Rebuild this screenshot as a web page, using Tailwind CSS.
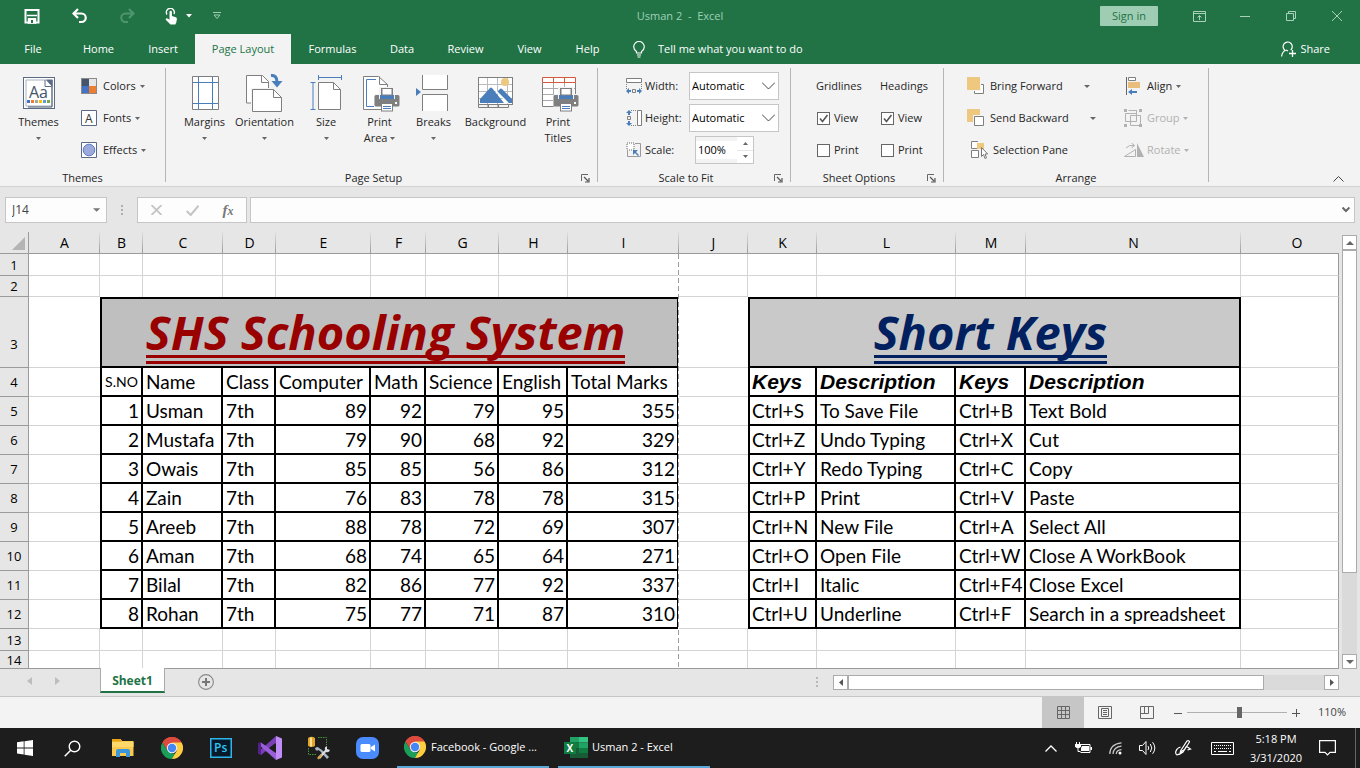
<!DOCTYPE html>
<html lang="en">
<head>
<meta charset="utf-8">
<title>Usman 2 - Excel</title>
<script src="https://cdn.jsdelivr.net/npm/@tailwindcss/browser@4"></script>
</head>
<body class="flex h-screen flex-col overflow-hidden bg-[#e6e6e6] font-['Open_Sans','Noto_Sans',sans-serif] text-[12px] text-[#262626]">

<svg class="hidden" aria-hidden="true">
  <symbol id="printer" viewBox="0 0 26 25">
    <rect x="5" y="0" width="16" height="9" fill="#f3f3f3"/>
    <rect x="0" y="7" width="26" height="13" rx="2" fill="#f3f3f3"/>
    <rect x="7.500" y="1.500" width="11" height="8" fill="#fff" stroke="#7f7f7f"/>
    <path d="M2 8h22a1.500 1.500 0 0 1 1.500 1.500V18a1.500 1.500 0 0 1-1.500 1.500H2A1.500 1.500 0 0 1 .5 18V9.500A1.500 1.500 0 0 1 2 8z" fill="#7f7f7f"/>
    <path d="M5 8h16v4H5z" fill="#f3f3f3"/><path d="M6 8h14v4H6z" fill="#4a7ebb"/>
    <path d="M8 8V1.500h10V8z" fill="#fff" stroke="#7f7f7f"/>
    <rect x="21" y="15" width="2" height="2" fill="#fff"/>
    <rect x="7.500" y="16.500" width="11" height="7.500" fill="#fff" stroke="#7f7f7f"/>
    <path d="M9 19.500h8M9 21.500h8" stroke="#4a7ebb"/>
  </symbol>
  <symbol id="chrome" viewBox="0 0 22 22">
    <path d="M11 11 1.470 5.500A11 11 0 0 1 20.530 5.500z" fill="#db4a3c"/>
    <path d="M11 0a11 11 0 0 1 9.530 5.500H11L6.240 13.750 1.470 5.500A11 11 0 0 1 11 0z" fill="#dd4b3e"/>
    <path d="M1.470 5.500 6.240 13.750 11 16.500h4.760L11 22A11 11 0 0 1 1.470 5.500z" fill="#1a9f5b"/>
    <path d="M20.530 5.500A11 11 0 0 1 11 22l4.760-8.250L11 5.500z" fill="#ffcd40"/>
    <circle cx="11" cy="11" r="5.200" fill="#f4f4f4"/>
    <circle cx="11" cy="11" r="4.200" fill="#4587f3"/>
  </symbol>
  <symbol id="launcher" viewBox="0 0 9 9">
    <path d="M.5 7V.5H7" fill="none" stroke="#666"/><path d="M3 3l4 4M8 4v4H4" fill="none" stroke="#555" stroke-width="1.200"/>
  </symbol>
</svg>

<!-- Title bar -->
<header class="shrink-0 bg-[#217346] text-white">
  <div class="grid h-8 grid-cols-[1fr_auto_1fr] items-center">
    <div class="flex items-center pl-6">
      <button aria-label="Save" class="w-12"><svg width="16" height="16" viewBox="0 0 16 16"><path d="M1.500 2h13v12.500h-13z" fill="none" stroke="#fff" stroke-width="2"/><path d="M3 7.500h10M4.500 15V11h7v4z" stroke="#fff" stroke-width="1.500" fill="none"/><path d="M4 10h8v5H4z" fill="#fff"/><path d="M7 12h2v3H7z" fill="#217346"/></svg></button>
      <button aria-label="Undo" class="w-[47px]"><svg width="16" height="16" viewBox="0 0 16 16"><path d="M6 1 1.500 5.500 6 10M2 5.500h7.500a4.200 4.200 0 0 1 0 8.500H7" fill="none" stroke="#fff" stroke-width="2.200"/></svg></button>
      <button aria-label="Redo" class="w-[46px]" disabled><svg width="16" height="16" viewBox="0 0 16 16"><path d="M10 1l4.500 4.500L10 10M14 5.500H6.500a4.200 4.200 0 0 0 0 8.500H9" fill="none" stroke="#4f9670" stroke-width="2"/></svg></button>
      <button aria-label="Touch/Mouse Mode" class="flex w-12 items-center"><svg width="13" height="17" viewBox="0 0 13 17"><path d="M2 6.500A4 4 0 1 1 9 6" fill="none" stroke="#fff" stroke-width="1.400"/><path d="M4.500 4a1.200 1.200 0 0 1 2.400 0v4l4 1.200q1.200.5 1 1.800l-.6 3.500-1 2H5.500L1 12q-.8-1 .2-1.600 1-.4 1.800.4l1.500 1z" fill="#fff"/></svg><svg class="ml-2" width="6" height="4" viewBox="0 0 6 4"><path d="M0 0h6L3 3.500z" fill="#fff"/></svg></button>
      <button aria-label="Customize Quick Access Toolbar"><svg width="8" height="8" viewBox="0 0 8 8"><path d="M0 .5h8M1 3l3 3.500L7 3z" stroke="#9fcdb3" fill="none"/></svg></button>
    </div>
    <h1 class="whitespace-pre text-[11px] text-[#9fd0b5]">Usman 2  -  Excel</h1>
    <div class="flex items-center justify-end">
      <button class="mr-[18px] h-5 w-[58px] rounded-[1px] bg-[#9fcdb3] text-[11px] leading-5 text-[#217346]">Sign in</button>
      <button aria-label="Ribbon Display Options" class="flex w-[46px] justify-center"><svg width="13" height="11" viewBox="0 0 13 11"><path d="M.5.5h12v10H.5zM.5 2.500h12M6.500 9V4.500M4.500 6.500l2-2 2 2" fill="none" stroke="#a8d3ba"/></svg></button>
      <button aria-label="Minimize" class="flex w-[46px] justify-center"><svg width="10" height="10" viewBox="0 0 10 10"><path d="M0 5.500h10" stroke="#a8d3ba"/></svg></button>
      <button aria-label="Restore" class="flex w-[46px] justify-center"><svg width="10" height="10" viewBox="0 0 10 10"><path d="M.5 2.500h7v7h-7zM2.500 2.500v-2h7v7h-2" fill="none" stroke="#a8d3ba"/></svg></button>
      <button aria-label="Close" class="flex w-[46px] justify-center"><svg width="10" height="10" viewBox="0 0 10 10"><path d="M0 0l10 10M10 0 0 10" stroke="#a8d3ba"/></svg></button>
    </div>
  </div>
  <nav class="flex h-8 items-end text-[11px]">
    <button class="h-[30px] w-[66px]">File</button>
    <button class="h-[30px] w-[65px]">Home</button>
    <button class="h-[30px] w-16">Insert</button>
    <button class="h-[30px] w-24 bg-[#f3f3f3] text-[#217346]">Page Layout</button>
    <button class="h-[30px] w-[83px]">Formulas</button>
    <button class="h-[30px] w-14">Data</button>
    <button class="h-[30px] w-[71px]">Review</button>
    <button class="h-[30px] w-[57px]">View</button>
    <button class="h-[30px] w-[59px]">Help</button>
    <button class="flex h-[30px] items-center pl-4 font-medium"><svg class="mr-[13px]" width="12" height="17" viewBox="0 0 12 17"><path d="M3.500 12V10.500Q.7 8.500.7 5.800a5.300 5.300 0 0 1 10.600 0q0 2.700-2.800 4.700V12zM4 14h4M4.500 16h3" fill="none" stroke="#fff" stroke-width="1.200"/></svg>Tell me what you want to do</button>
    <button class="ml-auto flex h-[30px] items-center gap-1 pr-[30px] font-medium"><svg width="15" height="16" viewBox="0 0 15 16"><path d="M.6 15.500q.5-4.500 3.600-6A4.600 4.600 0 1 1 9.800 9M7 10l-2-1" fill="none" stroke="#fff" stroke-width="1.200"/><path d="M8 12.500h7M11.500 9v7" stroke="#fff" stroke-width="1.300"/></svg>Share</button>
  </nav>
</header>

<!-- Ribbon -->
<section aria-label="Page Layout ribbon" class="flex h-[123px] shrink-0 border-b border-[#d2d2d2] bg-[#f3f3f3] py-1 text-[11px]">

  <div class="flex w-[166px] flex-col border-r border-[#b5b5b5]">
    <div class="mt-0.5 flex h-24 shrink-0">
      <button class="ml-3 flex w-[53px] flex-col items-center pt-1.5">
        <svg width="32" height="34" viewBox="0 0 32 34"><rect x=".5" y="1.500" width="31" height="31" fill="#fff" stroke="#5b6b85"/><path d="M3 4h20l6 6v20H3z" fill="#fff" stroke="#a9b3c2"/><path d="M29 4v27H5" fill="none" stroke="#44546a"/><path d="M23 3.500h6.500V11z" fill="#5b6b85"/><path d="M22 4v6.500h6.500" fill="#fff" stroke="#5b6b85"/><text x="6" y="22" font-family="Open Sans" font-size="16" fill="#44546a">Aa</text><path d="M4 24h3v3H4z" fill="#4472c4"/><path d="M8 24h3v3H8z" fill="#ed7d31"/><path d="M12 24h3v3h-3z" fill="#a5a5a5"/><path d="M16 24h3v3h-3z" fill="#ffc000"/><path d="M20 24h3v3h-3z" fill="#5b9bd5"/><path d="M24 24h3v3h-3z" fill="#70ad47"/></svg>
        <span class="mt-1 leading-4">Themes</span>
        <svg class="mt-[7px]" width="5" height="3" viewBox="0 0 5 3"><path d="M0 0h5L2.500 3z" fill="#666"/></svg>
      </button>
      <div class="ml-4 flex flex-col items-start">
        <button class="flex h-8 items-center"><svg class="mr-1.5" width="16" height="16" viewBox="0 0 16 16"><path d="M0 0h16v16H0z" fill="#8a8a8a"/><path d="M1 1h7v7H1z" fill="#44546a"/><path d="M8 1h7v7H8z" fill="#e7e6e6"/><path d="M1 8h7v7H1z" fill="#4472c4"/><path d="M8 8h7v7H8z" fill="#ed7d31"/></svg>Colors<svg class="ml-1" width="5" height="3" viewBox="0 0 5 3"><path d="M0 0h5L2.500 3z" fill="#666"/></svg></button>
        <button class="flex h-8 items-center"><svg class="mr-1.5" width="16" height="16" viewBox="0 0 16 16"><path d="M.5.5h15v15H.5z" fill="#fff" stroke="#5b6b85"/><text x="4" y="12.500" font-family="Open Sans" font-size="12" fill="#333">A</text></svg>Fonts<svg class="ml-1" width="5" height="3" viewBox="0 0 5 3"><path d="M0 0h5L2.500 3z" fill="#666"/></svg></button>
        <button class="flex h-8 items-center"><svg class="mr-1.5" width="16" height="16" viewBox="0 0 16 16"><path d="M.5.5h15v15H.5z" fill="#fff" stroke="#5b6b85"/><circle cx="8" cy="8" r="5.800" fill="#9caadb" stroke="#5a7cc8"/></svg>Effects<svg class="ml-1" width="5" height="3" viewBox="0 0 5 3"><path d="M0 0h5L2.500 3z" fill="#666"/></svg></button>
      </div>
    </div>
    <div class="mt-1.5 text-center leading-3">Themes</div>
  </div>

  <div class="flex w-[432px] flex-col border-r border-[#b5b5b5]">
    <div class="mt-0.5 flex h-24 shrink-0 pl-3.5">
      <button class="flex w-[49px] flex-col items-center pt-1">
        <svg width="28" height="36" viewBox="0 0 28 36"><path d="M1.500 2.500h26v33h-26z" fill="#fff" stroke="#7f7f7f"/><path d="M7.500 3v32M21.500 3v32M2 8.500h25M2 29.500h25" stroke="#4a7ebb"/></svg>
        <span class="mt-1 leading-4">Margins</span>
        <svg class="mt-[7px]" width="5" height="3" viewBox="0 0 5 3"><path d="M0 0h5L2.500 3z" fill="#666"/></svg>
      </button>
      <button class="flex w-[71px] flex-col items-center pt-1">
        <svg width="37" height="38" viewBox="0 0 37 38" class="-mb-0.5"><path d="M.5 1.500h16l6 6V29H.5z" fill="#fff" stroke="#7f7f7f"/><path d="M15.500 1.500v7h7" fill="none" stroke="#7f7f7f"/><path d="M5 14h23l9 8v16H5z" fill="#f3f3f3"/><path d="M6.500 15.500h21l8 8v14h-29z" fill="#fff" stroke="#7f7f7f"/><path d="M27.500 15.500v8h8" fill="none" stroke="#7f7f7f"/><path d="M25 1.500q6-.5 6 6.500" fill="none" stroke="#4a7ebb" stroke-width="3"/><path d="M25.500 7h11L31 13.500z" fill="#4a7ebb"/></svg>
        <span class="mt-1 leading-4">Orientation</span>
        <svg class="mt-[7px]" width="5" height="3" viewBox="0 0 5 3"><path d="M0 0h5L2.500 3z" fill="#666"/></svg>
      </button>
      <button class="flex w-[52px] flex-col items-center pt-1">
        <svg width="32" height="36" viewBox="0 0 32 36"><path d="M8.500 1v5M31.500 1v5M8.500 3.500h23M.5 8.500h5M.5 35.500h5M3 8.500v27" stroke="#4a7ebb" fill="none"/><path d="M8.500 8.500h15l7 7v20h-22z" fill="#fff" stroke="#7f7f7f"/><path d="M23.500 8.500v7h7" fill="none" stroke="#7f7f7f"/></svg>
        <span class="mt-1 leading-4">Size</span>
        <svg class="mt-[7px]" width="5" height="3" viewBox="0 0 5 3"><path d="M0 0h5L2.500 3z" fill="#666"/></svg>
      </button>
      <button class="flex w-[55px] flex-col items-center pt-1">
        <svg width="37" height="38" viewBox="0 0 37 38" class="-mb-0.5 ml-1"><path d="M.5 2.500h15l9 8v25H.5z" fill="#fff" stroke="#7f7f7f"/><path d="M16.500 2.500v8h8" fill="none" stroke="#7f7f7f"/><path d="M13 5.500H3.500v27H11" fill="none" stroke="#4a7ebb"/><use href="#printer" x="11" y="13" width="26" height="25"/></svg>
        <span class="mt-1 leading-4">Print<br>Area <svg class="mb-0.5 inline" width="5" height="3" viewBox="0 0 5 3"><path d="M0 0h5L2.500 3z" fill="#666"/></svg></span>
      </button>
      <button class="flex w-[53px] flex-col items-center pt-1">
        <svg width="32" height="38" viewBox="0 0 32 38" class="-mb-0.5 mr-1"><path d="M6.500 1v14.500h25V1M6.500 37V20.500h25V37" fill="#fff" stroke="#7f7f7f"/><path d="M0 14l5 4-5 4z" fill="#4a7ebb"/></svg>
        <span class="mt-1 leading-4">Breaks</span>
        <svg class="mt-[7px]" width="5" height="3" viewBox="0 0 5 3"><path d="M0 0h5L2.500 3z" fill="#666"/></svg>
      </button>
      <button class="flex w-[71px] flex-col items-center pt-1">
        <svg width="35" height="36" viewBox="0 0 35 36"><path d="M.5 3.500h34v27H.5z" fill="#fff" stroke="#7f7f7f"/><path d="M9.500 4v30M19.500 4v30M29.500 4v26M1 10.500h33M1 17.500h33M1 24.500h33" stroke="#bbb"/><circle cx="27" cy="8" r="4" fill="#edc87e"/><path d="M2 29v-4l10-11q1-1 2 0l12 15z" fill="#4a7ebb"/><path d="M19 18l3-3q1-1 2 0l10 10v4h-4z" fill="#4a7ebb"/><path d="M18 17l12 12" stroke="#fff" stroke-width="1.500"/><path d="M.5 30.500v3h30v-3M10.500 31v2.500M20.500 31v2.500M.5 3.500h34v27H.5z" fill="none" stroke="#7f7f7f"/></svg>
        <span class="mt-1 leading-4">Background</span>
      </button>
      <button class="flex w-[54px] flex-col items-center pt-1">
        <svg width="37" height="38" viewBox="0 0 37 38" class="-mb-0.5 ml-1"><path d="M.5 8.500h33v24H.5z" fill="#fff" stroke="#7f7f7f"/><path d="M1 14.500h32M1 20.500h32M1 26.500h32M11.500 9v23M22.500 9v23" stroke="#aaa"/><path d="M.5 3.500h33v5H.5zM11.500 4v5M22.500 4v5" fill="#fff" stroke="#d2593c"/><use href="#printer" x="11" y="13" width="26" height="25"/></svg>
        <span class="mt-1 leading-4">Print<br>Titles</span>
      </button>
    </div>
    <div class="mt-1.5 flex h-3 items-center"><span class="flex-1 text-center leading-3">Page Setup</span><button aria-label="Page Setup options" class="w-4"><svg width="9" height="9"><use href="#launcher"/></svg></button></div>
  </div>

  <div class="flex w-[193px] flex-col border-r border-[#b5b5b5]">
    <div class="mt-0.5 h-24 shrink-0 pl-7">
      <div class="flex h-8 items-center"><svg width="16" height="16" viewBox="0 0 16 16"><path d="M.5.5h15v4H.5z" fill="#fff" stroke="#7f7f7f"/><path d="M.5 6v5M15.500 6v5" stroke="#7f7f7f" stroke-dasharray="1 1"/><path d="M6.500 11.500h3v3h-3z" fill="none" stroke="#7f7f7f"/><path d="M0 13l3-3v2h2v2H3v2zM16 13l-3-3v2h-2v2h2v2z" fill="#4a7ebb"/></svg><label for="w" class="ml-[3px] w-11">Width:</label>
        <span class="relative"><select id="w" class="h-7 w-[90px] appearance-none border border-[#c6c6c6] bg-white pl-0.5 text-[11px] text-black"><option>Automatic</option></select><svg class="pointer-events-none absolute top-2.5 right-1" width="13" height="8" viewBox="0 0 13 8"><path d="M0 .5l6.500 6.500L13 .5" fill="none" stroke="#444"/></svg></span></div>
      <div class="flex h-8 items-center"><svg width="16" height="16" viewBox="0 0 16 16"><path d="M11.500.5h4v15h-4z" fill="#fff" stroke="#7f7f7f"/><path d="M5 .5h6M5 15.500h6" stroke="#7f7f7f" stroke-dasharray="1 1"/><path d="M1.500 6.500h3v3h-3z" fill="none" stroke="#7f7f7f"/><path d="M3 0l3 3H4v2H2V3H0zM3 16l3-3H4v-2H2v2H0z" fill="#4a7ebb"/></svg><label for="h" class="ml-[3px] w-11">Height:</label>
        <span class="relative"><select id="h" class="h-7 w-[90px] appearance-none border border-[#c6c6c6] bg-white pl-0.5 text-[11px] text-black"><option>Automatic</option></select><svg class="pointer-events-none absolute top-2.5 right-1" width="13" height="8" viewBox="0 0 13 8"><path d="M0 .5l6.500 6.500L13 .5" fill="none" stroke="#444"/></svg></span></div>
      <div class="flex h-8 items-center"><svg width="16" height="16" viewBox="0 0 16 16"><path d="M9 1.500h5.500v13H1.500V9" fill="none" stroke="#9a9a9a"/><path d="M1 1h7v7H1z" fill="#fff" stroke="#666" stroke-dasharray="1 1"/><path d="M7 8h5l-2 2 3 3-1 1-3-3-2 2z" fill="#4a7ebb"/></svg><label for="s" class="ml-[3px] w-[50px]">Scale:</label>
        <div class="flex h-7 w-[59px] border border-[#c6c6c6] bg-[#f3f3f3]"><input id="s" value="100%" class="my-1 w-[41px] bg-white pl-0.5 text-[11px] text-black">
          <div class="flex flex-1 flex-col bg-white"><button aria-label="Increase scale" class="flex flex-1 items-center justify-center border-b border-[#e6e6e6]"><svg width="5" height="3" viewBox="0 0 5 3"><path d="M0 3h5L2.500 0z" fill="#666"/></svg></button><button aria-label="Decrease scale" class="flex flex-1 items-center justify-center"><svg width="5" height="3" viewBox="0 0 5 3"><path d="M0 0h5L2.500 3z" fill="#666"/></svg></button></div></div></div>
    </div>
    <div class="mt-1.5 flex h-3 items-center"><span class="flex-1 text-center leading-3">Scale to Fit</span><button aria-label="Scale to Fit options" class="w-4"><svg width="9" height="9"><use href="#launcher"/></svg></button></div>
  </div>

  <div class="flex w-[153px] flex-col border-r border-[#b5b5b5]">
    <div class="mt-0.5 grid h-24 shrink-0 grid-cols-[64px_64px] grid-rows-3 items-center pl-[25px]">
      <span>Gridlines</span><span>Headings</span>
      <label class="flex items-center gap-1"><span class="relative ml-px flex"><input type="checkbox" checked class="peer size-[13px] appearance-none border border-[#666] bg-white"><svg class="pointer-events-none absolute inset-0 hidden peer-checked:block" width="13" height="13" viewBox="0 0 13 13"><path d="M3 6.500l2.500 3L10.500 3" fill="none" stroke="#555" stroke-width="1.600"/></svg></span>View</label>
      <label class="flex items-center gap-1"><span class="relative ml-px flex"><input type="checkbox" checked class="peer size-[13px] appearance-none border border-[#666] bg-white"><svg class="pointer-events-none absolute inset-0 hidden peer-checked:block" width="13" height="13" viewBox="0 0 13 13"><path d="M3 6.500l2.500 3L10.500 3" fill="none" stroke="#555" stroke-width="1.600"/></svg></span>View</label>
      <label class="flex items-center gap-1"><input type="checkbox" class="ml-px size-[13px] appearance-none border border-[#666] bg-white">Print</label>
      <label class="flex items-center gap-1"><input type="checkbox" class="ml-px size-[13px] appearance-none border border-[#666] bg-white">Print</label>
    </div>
    <div class="mt-1.5 flex h-3 items-center"><span class="flex-1 text-center leading-3">Sheet Options</span><button aria-label="Sheet Options" class="w-4"><svg width="9" height="9"><use href="#launcher"/></svg></button></div>
  </div>

  <div class="flex w-[265px] flex-col border-r border-[#b5b5b5]">
    <div class="mt-0.5 flex h-24 shrink-0 pl-[23px]">
      <div class="flex w-[157px] flex-col items-start">
        <button class="flex h-8 items-center"><svg width="17" height="18" viewBox="0 0 17 18"><path d="M7.500 7.500h9v9h-9z" fill="#fff" stroke="#7f7f7f"/><path d="M0 0h14v14H0z" fill="#f3f3f3"/><path d="M0 0h13v13H0z" fill="#edc87e"/></svg><span class="ml-1.5 w-[94px] text-left">Bring Forward</span><svg width="6" height="3" viewBox="0 0 6 3"><path d="M0 0h6L3 3z" fill="#666"/></svg></button>
        <button class="flex h-8 items-center"><svg width="17" height="18" viewBox="0 0 17 18"><path d="M0 0h13v13H0z" fill="#edc87e"/><path d="M6 6h11v11H6z" fill="#f3f3f3"/><path d="M7.500 7.500h9v9h-9z" fill="#fff" stroke="#7f7f7f"/></svg><span class="ml-1.5 w-[100px] text-left">Send Backward</span><svg width="6" height="3" viewBox="0 0 6 3"><path d="M0 0h6L3 3z" fill="#666"/></svg></button>
        <button class="flex h-8 items-center pl-1"><svg width="17" height="18" viewBox="0 0 17 18"><path d="M7 .5H.5v7H6M.5 9.500h7v7h-7z" fill="#fff" stroke="#7f7f7f"/><path d="M6 2h7v6H6z" fill="#edc87e"/><path d="M10.500 6.500v9l2-2 1.500 4 1.500-.7-1.500-3.800h2.700z" fill="#fff" stroke="#777"/></svg><span class="ml-[5px]">Selection Pane</span></button>
      </div>
      <div class="flex flex-col items-start">
        <button class="flex h-8 items-center"><svg width="18" height="18" viewBox="0 0 18 18"><path d="M2.500 0v18" stroke="#666"/><path d="M4.500.5h7v3h-7z" fill="#fff" stroke="#7f7f7f"/><path d="M4 5h12v6H4z" fill="#e9bd7c"/><path d="M4 15l4-3v2h5v2H8v2z" fill="#4a7ebb"/></svg><span class="ml-[5px]">Align</span><svg class="ml-1" width="5" height="3" viewBox="0 0 5 3"><path d="M0 0h5L2.500 3z" fill="#666"/></svg></button>
        <button class="flex h-8 items-center text-[#b1b1b1]" disabled><svg width="18" height="18" viewBox="0 0 18 18"><path d="M4.500 1.500h8v11h-11v-8h11M6.500 6.500h10v10h-10zM12.500 1.500v4" fill="none" stroke="#b1b1b1"/><path d="M0 0h3v3H0zM15 0h3v3h-3zM0 15h3v3H0zM15 15h3v3h-3z" fill="#b1b1b1"/></svg><span class="ml-[5px]">Group</span><svg class="ml-[3px]" width="5" height="3" viewBox="0 0 5 3"><path d="M0 0h5L2.500 3z" fill="#b1b1b1"/></svg></button>
        <button class="flex h-8 items-center text-[#b1b1b1]" disabled><svg width="20" height="14" viewBox="0 0 20 14"><path d="M.5 13.500h11v-7zM2 5q3-3.500 8-2.500M7.500 0l3 2.500-3 2.500" fill="none" stroke="#b1b1b1"/><path d="M13 0v14h7z" fill="#b1b1b1"/></svg><span class="ml-[3px]">Rotate</span><svg class="ml-[3px]" width="5" height="3" viewBox="0 0 5 3"><path d="M0 0h5L2.500 3z" fill="#b1b1b1"/></svg></button>
      </div>
    </div>
    <div class="mt-1.5 text-center leading-3">Arrange</div>
  </div>
  <button aria-label="Collapse the Ribbon" class="mt-auto mr-4 ml-auto"><svg width="11" height="6" viewBox="0 0 11 6"><path d="M.5 5.500l5-5 5 5" fill="none" stroke="#444"/></svg></button>
</section>

<!-- Formula bar -->
<section aria-label="Formula bar" class="flex h-[45px] shrink-0 items-start bg-[#e6e6e6] pt-2.5 pr-[5px] pl-[5px]">
  <div class="flex h-[26px] w-[102px] items-center border border-[#c6c6c6] bg-[#fdfdfd] pr-1.5"><input aria-label="Name Box" value="J14" class="w-full bg-transparent pl-1.5 text-[12px] text-[#444]"><svg width="8" height="4" viewBox="0 0 8 4"><path d="M0 0h8L4 4z" fill="#777"/></svg></div>
  <svg class="mt-2 ml-3.5" width="2" height="10" viewBox="0 0 2 10"><path d="M0 0h2v2H0zM0 4h2v2H0zM0 8h2v2H0z" fill="#b0b0b0"/></svg>
  <div class="ml-3.5 flex h-[26px] w-[110px] items-center border border-[#c6c6c6] bg-[#fdfdfd]">
    <button aria-label="Cancel" class="flex w-9 justify-center"><svg width="11" height="10" viewBox="0 0 11 10"><path d="M.5 0l10 10M10.500 0l-10 10" stroke="#c4c4c4" stroke-width="1.800"/></svg></button>
    <button aria-label="Enter" class="flex w-9 justify-center"><svg width="13" height="11" viewBox="0 0 13 11"><path d="M.7 6l4 4L12.500.7" fill="none" stroke="#c4c4c4" stroke-width="2"/></svg></button>
    <button aria-label="Insert Function" class="w-9 font-['Liberation_Serif',serif] text-[15px] leading-5 font-bold text-[#777] italic">f<span class="text-[12px]">x</span></button>
  </div>
  <div class="ml-[3px] flex h-[26px] flex-1 items-center border border-[#c6c6c6] bg-[#fdfdfd] pr-1"><input aria-label="Formula" class="w-full bg-transparent px-1"><svg width="8" height="6" viewBox="0 0 8 6"><path d="M.5.5L4 4 7.500.5" fill="none" stroke="#666" stroke-width="2"/></svg></div>
</section>

<!-- Worksheet -->
<main class="flex min-h-0 flex-1">
  <div class="relative min-w-0 flex-1 overflow-hidden border-b border-[#9b9b9b]">
    <table class="w-full table-fixed border-separate border-spacing-0 bg-white text-black">
      <colgroup><col class="w-[29px]"><col class="w-[71px]"><col class="w-[43px]"><col class="w-[80px]"><col class="w-[53px]"><col class="w-[95px]"><col class="w-[55px]"><col class="w-[73px]"><col class="w-[69px]"><col class="w-[111px]"><col class="w-[69px]"><col class="w-[69px]"><col class="w-[139px]"><col class="w-[70px]"><col class="w-[215px]"><col></colgroup>
      <thead id="head"></thead>
      <tbody id="body"></tbody>
    </table>
    <div class="absolute top-[22px] bottom-0 left-[678px] w-px bg-[repeating-linear-gradient(to_bottom,#9b9b9b_0,#9b9b9b_5px,#fff_5px,#fff_8px)]"></div>
  </div>
  <div class="flex w-[21px] shrink-0 flex-col pt-[3px] pl-[3px]">
    <button aria-label="Scroll up" class="flex h-[15px] w-[15px] items-center justify-center border border-[#ababab] bg-white"><svg width="8" height="4" viewBox="0 0 8 4"><path d="M0 4h8L4 0z" fill="#666"/></svg></button>
    <div class="w-[15px] flex-1 bg-[#dadada]"><div class="h-4/5 border border-[#ababab] bg-white"></div></div>
    <button aria-label="Scroll down" class="flex h-[15px] w-[15px] items-center justify-center border border-[#ababab] bg-white"><svg width="8" height="4" viewBox="0 0 8 4"><path d="M0 0h8L4 4z" fill="#666"/></svg></button>
  </div>
</main>

<!-- Sheet tabs -->
<div class="flex h-7 shrink-0 items-start border-b border-[#c6c6c6]">
  <div class="flex w-[100px] gap-[23px] pt-2 pl-[27px]">
    <button aria-label="Previous sheet"><svg width="5" height="8" viewBox="0 0 5 8"><path d="M5 0v8L0 4z" fill="#bdbdbd"/></svg></button>
    <button aria-label="Next sheet"><svg width="5" height="8" viewBox="0 0 5 8"><path d="M0 0v8l5-4z" fill="#bdbdbd"/></svg></button>
  </div>
  <button class="relative -mt-px h-[25px] w-[65px] border-x border-b-2 border-x-[#ababab] border-b-[#217346] bg-white pt-0.5 text-[12px] font-bold text-[#217346]">Sheet1</button>
  <button aria-label="New sheet" class="mt-[5px] ml-[33px]"><svg width="16" height="16" viewBox="0 0 16 16"><circle cx="8" cy="8" r="7.400" fill="none" stroke="#888" stroke-width="1.100"/><path d="M4 8h8M8 4v8" stroke="#777" stroke-width="2"/></svg></button>
  <div class="mr-[21px] ml-auto flex w-[523px] items-start pt-1.5">
    <svg class="mt-0.5" width="2" height="10" viewBox="0 0 2 10"><path d="M0 0h2v2H0zM0 4h2v2H0zM0 8h2v2H0z" fill="#b8b8b8"/></svg>
    <button aria-label="Scroll left" class="ml-[15px] flex size-[15px] items-center justify-center border border-[#ababab] bg-white"><svg width="4" height="7" viewBox="0 0 4 7"><path d="M4 0v7L0 3.500z" fill="#555"/></svg></button>
    <div class="h-[15px] w-[476px] bg-[#dadada]"><div class="h-full w-[416px] border border-[#ababab] bg-white"></div></div>
    <button aria-label="Scroll right" class="flex size-[15px] items-center justify-center border border-[#ababab] bg-white"><svg width="4" height="7" viewBox="0 0 4 7"><path d="M0 0v7l4-3.500z" fill="#555"/></svg></button>
  </div>
</div>

<!-- Status bar -->
<footer class="flex h-[31px] shrink-0 items-center justify-end bg-[#f3f3f3]">
  <button aria-label="Normal view" class="flex h-full w-[42px] items-center justify-center bg-[#c6c6c6]"><svg width="13" height="13" viewBox="0 0 13 13"><path d="M.5.5h12v12H.5zM4.500 0v13M8.500 0v13M0 4.500h13M0 8.500h13" fill="none" stroke="#666"/></svg></button>
  <button aria-label="Page Layout view" class="flex h-full w-[42px] items-center justify-center"><svg width="14" height="13" viewBox="0 0 14 13"><path d="M.5.5h13v12H.5zM3.500 2.500h7v8h-7zM5 4.500h4M5 6.500h4M5 8.500h4" fill="none" stroke="#666"/></svg></button>
  <button aria-label="Page Break Preview" class="flex h-full w-[42px] items-center justify-center"><svg width="14" height="13" viewBox="0 0 14 13"><path d="M.5.5h13v12H.5zM.5 7.500h8M4.500.5v7M8.500.5v7" fill="none" stroke="#666"/></svg></button>
  <button aria-label="Zoom out" class="ml-1.5"><svg width="8" height="8" viewBox="0 0 8 8"><path d="M0 4.500h8" stroke="#555"/></svg></button>
  <input type="range" aria-label="Zoom" min="0" max="200" value="105" class="mx-[5px] h-3 w-[100px] appearance-none bg-[linear-gradient(#b0b0b0,#b0b0b0)] bg-[length:100%_1px] bg-center bg-no-repeat [&::-webkit-slider-thumb]:h-[11px] [&::-webkit-slider-thumb]:w-[5px] [&::-webkit-slider-thumb]:appearance-none [&::-webkit-slider-thumb]:bg-[#666]">
  <button aria-label="Zoom in"><svg width="8" height="8" viewBox="0 0 8 8"><path d="M0 4.500h8M4.500 0v8" stroke="#555"/></svg></button>
  <button class="w-[60px] pr-3.5 text-right text-[11px] text-[#444]">110%</button>
</footer>

<!-- Taskbar -->
<nav aria-label="Taskbar" class="flex h-10 shrink-0 items-center bg-[#1d1d1d] text-[11px] text-white">
  <button aria-label="Start" class="flex w-[49px] justify-center"><svg width="16" height="16" viewBox="0 0 16 16"><path d="M0 2.300l6.700-1v6.200H0zM7.500 1.200L16 0v7.500H7.500zM0 8.400h6.700v6.200l-6.700-1zM7.500 8.400H16V16l-8.500-1.200z" fill="#fff"/></svg></button>
  <button aria-label="Search" class="flex w-[49px] justify-center pr-0.5"><svg width="17" height="17" viewBox="0 0 17 17"><circle cx="10.500" cy="6.500" r="5.300" fill="none" stroke="#fff" stroke-width="1.400"/><path d="M6.700 10.300L.7 16.300" stroke="#fff" stroke-width="1.500"/></svg></button>
  <button aria-label="File Explorer" class="flex w-[49px] justify-center"><svg width="22" height="18" viewBox="0 0 22 18"><path d="M0 0h8l2 2H0z" fill="#e8a317"/><path d="M0 0h8.500l1.500 2h11.500v15H0z" fill="#fbc94b"/><path d="M0 0h8.500l1 2.500H0z" fill="#e8a317"/><path d="M0 3h21.500v5H0z" fill="#ffd86b"/><path d="M4 18v-6q0-2 2-2h10q2 0 2 2v6h-4v-4H8v4z" fill="#3a96dd"/></svg></button>
  <button aria-label="Google Chrome" class="flex w-[49px] justify-center"><svg width="22" height="22"><use href="#chrome"/></svg></button>
  <button aria-label="Photoshop" class="flex w-[49px] justify-center"><svg width="22" height="20" viewBox="0 0 22 20"><path d="M.75.75h20.500v18.500H.75z" fill="#061a2b" stroke="#2fb5ea" stroke-width="1.500"/><text x="4" y="14" font-family="Open Sans" font-weight="600" font-size="12" fill="#31c5f0">Ps</text></svg></button>
  <button aria-label="Visual Studio" class="flex w-[49px] justify-center"><svg width="24" height="24" viewBox="0 0 24 24"><path d="M18 0l6 2.500v19L18 24z" fill="#c08cf5"/><path d="M18 0v7L3 19l-3-1.700V16z" fill="#7a3fb5"/><path d="M0 8l3-1.500L18 17v7L0 8z" fill="#9a5fd8"/><path d="M0 7l3-1v13l-3-1.500z" fill="#52218a"/><path d="M17 7.500L11 12l6 4.500z" fill="#1d1d1d"/></svg></button>
  <button aria-label="Database Tools" class="flex w-[49px] justify-center"><svg width="24" height="24" viewBox="0 0 24 24"><path d="M1 2q3.500-2.500 7 0v8q-3.500 2-7 0z" fill="#e5a52a"/><path d="M3 1.500h2v9H3z" fill="#fbe39a"/><path d="M11 1.500h8.500V9M1.500 12v6.500H9" fill="none" stroke="#3f9a35" stroke-dasharray="1.500 1"/><path d="M8 13q0-2 3-2l1 1 3 2 7 7-2 2-7-8-2-1-1 1z" fill="#aab8c6"/><path d="M11 21l7-7q-1-3 2-4v3l3 1q-1 3-4 2l-6 7z" fill="#d7dde2"/><path d="M10 22l4-4 1.500 1.500-4 4z" fill="#d7a54b"/></svg></button>
  <button aria-label="Zoom Meetings" class="flex w-[49px] justify-center"><svg width="23" height="22" viewBox="0 0 23 22"><rect width="23" height="22" rx="7" fill="#4a8cff"/><rect x="4.500" y="7" width="10" height="8" rx="1.500" fill="#fff"/><path d="M15 10l4-2.500v7L15 12z" fill="#fff"/></svg></button>
  <button class="ml-[5px] flex h-full w-[152px] items-center gap-[5px] border-b-2 border-[#5aa7d8] pl-[7px]"><svg width="22" height="22"><use href="#chrome"/></svg>Facebook - Google ...</button>
  <button class="ml-[9px] flex h-full w-[152px] items-center gap-1 border-b-2 border-[#5aa7d8] pl-1.5"><svg width="24" height="21" viewBox="0 0 24 21"><path d="M6 0h9v5.500H6z" fill="#21a366"/><path d="M15 0h9v5.500h-9z" fill="#33c481"/><path d="M6 5.500h9V11H6z" fill="#107c41"/><path d="M15 5.500h9V11h-9z" fill="#21a366"/><path d="M6 11h9v10H6z" fill="#185c37"/><path d="M15 11h9v5h-9z" fill="#107c41"/><path d="M15 16h9v5h-9z" fill="#185c37"/><path d="M0 5h12v12H0z" fill="#107c41"/><text x="2.500" y="14.500" font-family="Open Sans" font-weight="700" font-size="10" fill="#fff">X</text></svg>Usman 2 - Excel</button>
  <div class="ml-auto flex items-center">
    <button aria-label="Show hidden icons" class="flex w-8 justify-center"><svg width="12" height="7" viewBox="0 0 12 7"><path d="M.5 6.500L6 1l5.500 5.500" fill="none" stroke="#fff" stroke-width="1.300"/></svg></button>
    <button aria-label="Battery" class="flex w-8 justify-center"><svg width="17" height="12" viewBox="0 0 17 12"><path d="M6 2.500h9v8H5.500" fill="none" stroke="#fff"/><path d="M7 4h7v5H6V6z" fill="#fff"/><path d="M15.500 5H17v3h-1.500z" fill="#fff"/><path d="M1.500 0v2.500M4.500 0v2.500M3 6v3.500h2.500" stroke="#fff" fill="none"/><path d="M0 2h6v2.500L4.500 6h-3L0 4.500z" fill="#fff"/></svg></button>
    <button aria-label="Wi-Fi" class="flex w-8 justify-center"><svg width="13" height="13" viewBox="0 0 13 13"><path d="M.8 12Q1 2 12.500.8M4 12Q4.500 5 12.500 4.200M7.200 12q.5-4 5.300-4.300" fill="none" stroke="#ccc" stroke-width="1.200"/><circle cx="11" cy="11" r="1.500" fill="#fff"/></svg></button>
    <button aria-label="Volume" class="flex w-8 justify-center"><svg width="17" height="14" viewBox="0 0 17 14"><path d="M.5 4.500h3l3.500-4v13l-3.500-4h-3zM9 5q1.500 2 0 4M11.300 3q3 4 0 8M13.600 1.200q4.500 5.800 0 11.600" fill="none" stroke="#fff"/></svg></button>
    <button aria-label="Windows Ink" class="flex w-9 justify-center pl-1"><svg width="17" height="16" viewBox="0 0 17 16"><path d="M5.500 11L12 1q2-1 2.500 1L8 12l-3 2zM5.500 7Q2 8 1 11t1 4q3-.5 5-4 3-1 3.500-3t2-1 3 2l-3 1" fill="none" stroke="#fff" stroke-width="1.200"/></svg></button>
    <button aria-label="Touch keyboard" class="flex w-[46px] justify-center"><svg width="23" height="13" viewBox="0 0 23 13"><path d="M.5.5h22v12H.5z" fill="none" stroke="#fff"/><path d="M3 3.500h17M3 6.500h17" stroke="#fff" stroke-dasharray="1 1"/><path d="M3 9.500h2M7 9.500h9M18 9.500h2" stroke="#fff"/></svg></button>
    <button class="w-[62px] text-center text-[11px] leading-[19px]">5:18 PM<br>3/31/2020</button>
    <button aria-label="Notifications" class="ml-3 flex w-[17px]"><svg width="17" height="16" viewBox="0 0 17 16"><path d="M.6.6h15.800v11.800H11L8.500 15 6 12.400H.6z" fill="none" stroke="#fff" stroke-width="1.200"/></svg></button>
    <div class="mr-1 ml-[19px] h-10 w-px bg-[#666]"></div>
  </div>
</nav>

<script>
  const left = [
    ['1','Usman','7th','89','92','79','95','355'], ['2','Mustafa','7th','79','90','68','92','329'],
    ['3','Owais','7th','85','85','56','86','312'], ['4','Zain','7th','76','83','78','78','315'],
    ['5','Areeb','7th','88','78','72','69','307'], ['6','Aman','7th','68','74','65','64','271'],
    ['7','Bilal','7th','82','86','77','92','337'], ['8','Rohan','7th','75','77','71','87','310']];
  const right = [
    ['Ctrl+S','To Save File','Ctrl+B','Text Bold'], ['Ctrl+Z','Undo Typing','Ctrl+X','Cut'],
    ['Ctrl+Y','Redo Typing','Ctrl+C','Copy'], ['Ctrl+P','Print','Ctrl+V','Paste'],
    ['Ctrl+N','New File','Ctrl+A','Select All'], ['Ctrl+O','Open File','Ctrl+W','Close A WorkBook'],
    ['Ctrl+I','Italic','Ctrl+F4','Close Excel'], ['Ctrl+U','Underline','Ctrl+F','Search in a spreadsheet']];

  const grid = 'border-r border-b border-[#d4d4d4]';
  const last = 'border-r border-b border-r-[#9b9b9b] border-b-[#d4d4d4]';
  const side = 'border-b border-[#d4d4d4]';
  const above = 'border-r border-[#d4d4d4]';
  const box = "border-r-2 border-b-2 border-black pr-0.5 font-['Lato',sans-serif] text-[19px] leading-[26px] whitespace-nowrap";
  const keyHead = "border-r-2 border-b-2 border-black pr-0.5 text-left font-['Liberation_Sans',sans-serif] text-[21px] leading-[26px] font-bold italic whitespace-nowrap";
  const rowHead = 'border-r border-b border-[#9b9b9b] bg-[#e6e6e6] p-0 text-[13px] font-normal';
  const td = (cls, text = '') => `<td class="${cls}">${text}</td>`;
  const rh = (n, extra = 'leading-5') => `<th scope="row" class="${rowHead} ${extra}">${n}</th>`;
  const first = c => c === 0 ? ' border-l-2 pl-0.5' : ' pl-[3px]';

  document.getElementById('head').innerHTML = '<tr class="h-[22px] bg-[#e6e6e6]">' +
    '<th class="border-r border-b border-[#9b9b9b] p-0"><svg class="ml-3 mt-0.5" width="13" height="13" viewBox="0 0 13 13"><path d="M13 0v13H0z" fill="#b4b4b4"/></svg></th>' +
    [...'ABCDEFGHIJKLMNO'].map(c => `<th scope="col" class="border-b border-[#9b9b9b] p-0 text-[14px] leading-5 font-normal ${c === 'O' ? 'pl-3.5' : 'bg-[linear-gradient(#e0e0e0,#9b9b9b)] bg-[length:1px_100%] bg-right bg-no-repeat'}">${c}</th>`).join('') + '</tr>';

  const blank = (n, h, extra) => `<tr class="${h}">${rh(n, extra)}${td(grid).repeat(14)}${td(last)}</tr>`;
  const title = "inline-block border-b-9 border-double font-['Open_Sans',sans-serif] text-[47px] leading-[46px] font-bold italic whitespace-nowrap";
  let rows = blank(1, 'h-[22px]');
  rows += `<tr class="h-[21px]">${rh(2)}${td(grid)}${td(above).repeat(8)}${td(grid)}${td(above).repeat(4)}${td(last)}</tr>`;
  rows += `<tr class="h-[71px]">${rh(3, 'leading-5 pt-6')}${td(side)}` +
    `<td colspan="8" class="border-2 border-black bg-[#bfbfbf] p-0 pt-2 pr-2 text-center"><span class="${title} border-[#990000] text-[#990000]">SHS Schooling System</span></td>` +
    td(side) +
    `<td colspan="4" class="border-2 border-black bg-[#c9c9c9] p-0 pt-2 pr-2 text-center"><span class="${title} border-[#002060] text-[#002060]">Short Keys</span></td>${td(last)}</tr>`;
  rows += `<tr class="h-[29px]">${rh(4)}${td(side)}` +
    "<td class=\"border-r-2 border-b-2 border-l-2 border-black p-0 text-center font-['Lato',sans-serif] text-[14px] leading-[26px]\">S.NO</td>" +
    ['Name','Class','Computer','Math','Science','English','Total Marks'].map(t => td(box + ' pl-[3px]', t)).join('') +
    td(side) + ['Keys','Description','Keys','Description'].map((t, c) => td(keyHead + first(c), t)).join('') + td(last) + '</tr>';
  left.forEach((r, i) => {
    rows += `<tr class="h-[29px]">${rh(i + 5)}${td(side)}` +
      r.map((t, c) => td(box + first(c) + (c === 1 || c === 2 ? '' : ' text-right'), t)).join('') +
      td(side) + right[i].map((t, c) => td(box + first(c), t)).join('') + td(last) + '</tr>';
  });
  rows += blank(13, 'h-[22px]') + blank(14, 'h-[18px]', 'leading-4');
  document.getElementById('body').innerHTML = rows;
</script>
</body>
</html>
